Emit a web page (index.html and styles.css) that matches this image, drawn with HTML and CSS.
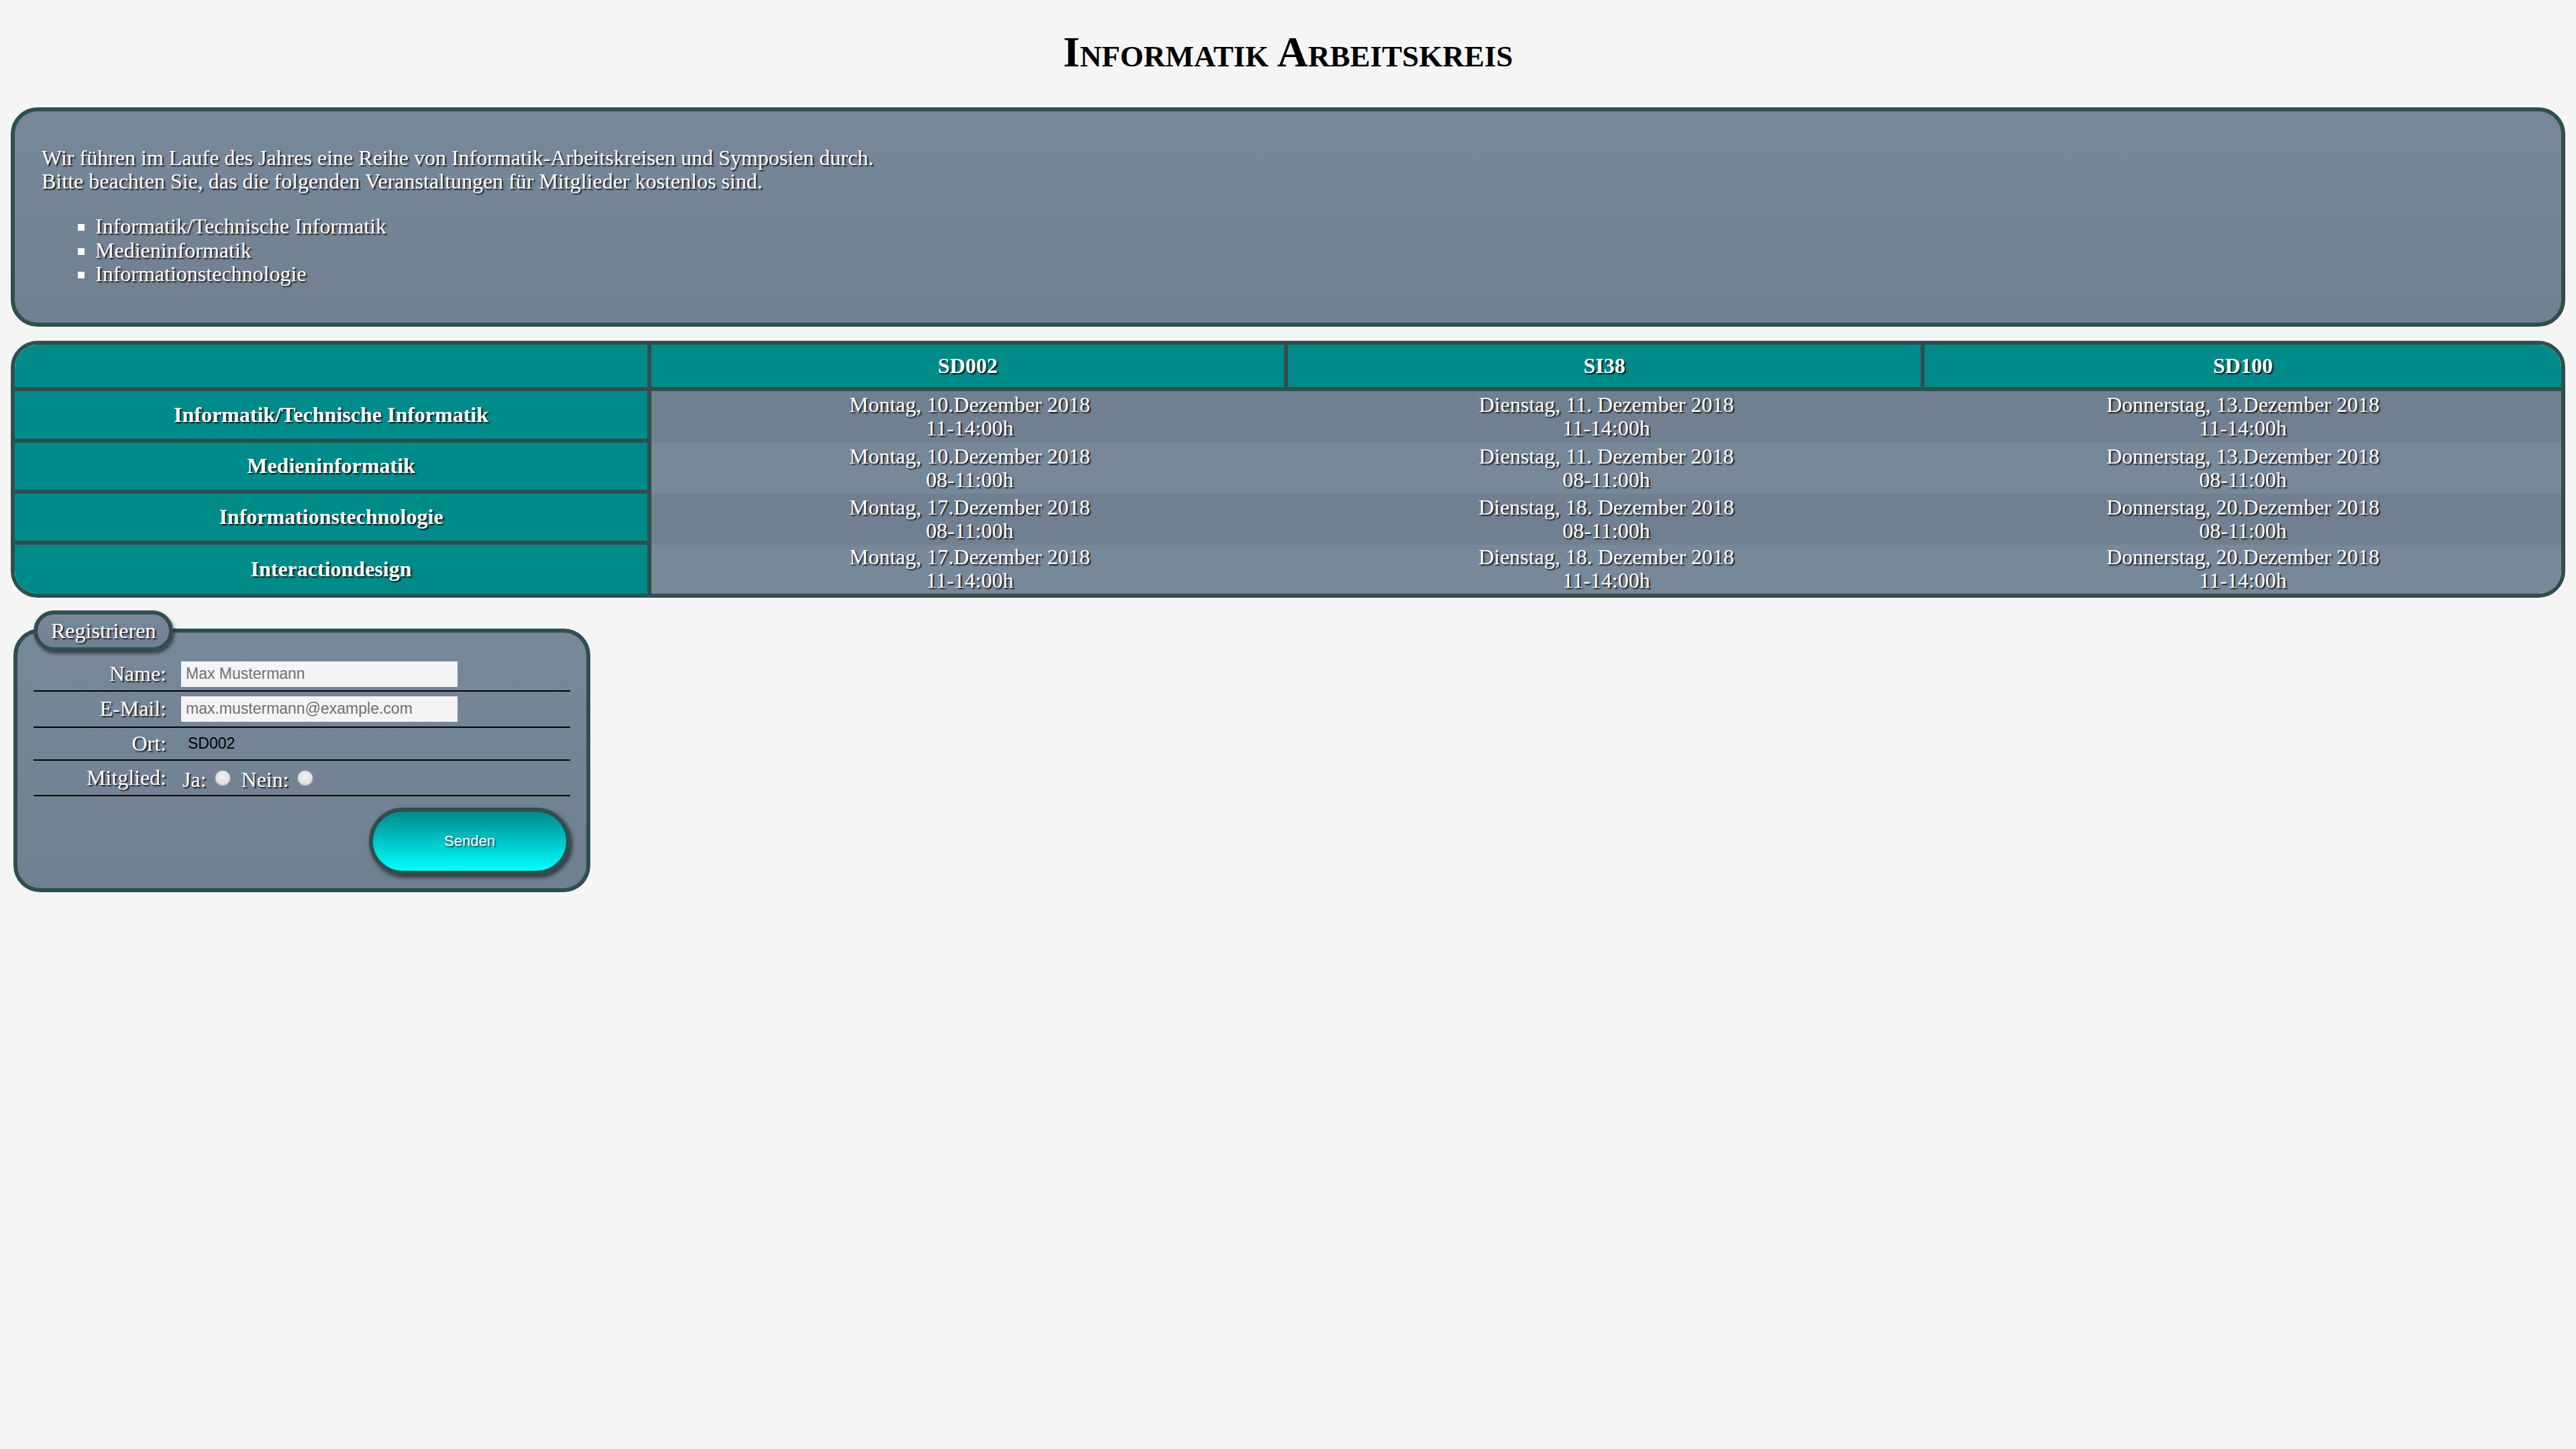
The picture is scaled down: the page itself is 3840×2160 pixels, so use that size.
FILE: index.html
```html
<!DOCTYPE html>
<html lang="de">
<head>
<meta charset="utf-8">
<title>Informatik Arbeitskreis</title>
<link rel="stylesheet" href="styles.css">
</head>
<body>
<h1 class="title">Informatik Arbeitskreis</h1>

<section class="intro">
  <p class="intro-text">Wir führen im Laufe des Jahres eine Reihe von Informatik-Arbeitskreisen und Symposien durch.<br>Bitte beachten Sie, das die folgenden Veranstaltungen für Mitglieder kostenlos sind.</p>
  <ul class="topics">
    <li>Informatik/Technische Informatik</li>
    <li>Medieninformatik</li>
    <li>Informationstechnologie</li>
  </ul>
</section>

<table class="schedule">
  <thead>
    <tr><th></th><th>SD002</th><th>SI38</th><th>SD100</th></tr>
  </thead>
  <tbody>
    <tr>
      <th>Informatik/Technische Informatik</th>
      <td>Montag, 10.Dezember 2018<br>11-14:00h</td>
      <td>Dienstag, 11. Dezember 2018<br>11-14:00h</td>
      <td>Donnerstag, 13.Dezember 2018<br>11-14:00h</td>
    </tr>
    <tr>
      <th>Medieninformatik</th>
      <td>Montag, 10.Dezember 2018<br>08-11:00h</td>
      <td>Dienstag, 11. Dezember 2018<br>08-11:00h</td>
      <td>Donnerstag, 13.Dezember 2018<br>08-11:00h</td>
    </tr>
    <tr>
      <th>Informationstechnologie</th>
      <td>Montag, 17.Dezember 2018<br>08-11:00h</td>
      <td>Dienstag, 18. Dezember 2018<br>08-11:00h</td>
      <td>Donnerstag, 20.Dezember 2018<br>08-11:00h</td>
    </tr>
    <tr>
      <th>Interactiondesign</th>
      <td>Montag, 17.Dezember 2018<br>11-14:00h</td>
      <td>Dienstag, 18. Dezember 2018<br>11-14:00h</td>
      <td>Donnerstag, 20.Dezember 2018<br>11-14:00h</td>
    </tr>
  </tbody>
</table>

<form class="register">
  <fieldset class="register-box">
    <legend class="register-legend">Registrieren</legend>
    <div class="form-row row-name">
      <label class="form-label" for="name">Name:</label>
      <div class="form-value"><input class="text-input" id="name" type="text" placeholder="Max Mustermann"></div>
    </div>
    <div class="form-row row-mail">
      <label class="form-label" for="mail">E-Mail:</label>
      <div class="form-value"><input class="text-input" id="mail" type="email" placeholder="max.mustermann@example.com"></div>
    </div>
    <div class="form-row row-ort">
      <span class="form-label">Ort:</span>
      <div class="form-value"><span class="ort-value">SD002</span></div>
    </div>
    <div class="form-row row-member">
      <span class="form-label">Mitglied:</span>
      <div class="form-value radios">
        <label class="radio-label" for="ja">Ja:</label><input class="radio" type="radio" id="ja" name="mitglied">
        <label class="radio-label" for="nein">Nein:</label><input class="radio" type="radio" id="nein" name="mitglied">
      </div>
    </div>
    <div class="form-actions">
      <button class="send" type="submit">Senden</button>
    </div>
  </fieldset>
</form>
</body>
</html>
```

FILE: styles.css
```css
html {
  background: #f5f5f5;
}

body {
  margin: 0 16px 16px;
  font-family: "Liberation Serif", "Times New Roman", serif;
  font-size: 32px;
  line-height: 1.1;
  color: #ffffff;
}

.title {
  margin: 0;
  padding: 41px 0 45px;
  font-size: 64px;
  line-height: normal;
  font-weight: bold;
  font-variant: small-caps;
  text-align: center;
  color: #000000;
}

.intro {
  margin: 0 0 21px;
  padding: 20px 40px 23px;
  border: 6px solid #2f4f4f;
  border-radius: 40px;
  background: linear-gradient(#778899, #708090);
  text-shadow: 2px 2px 2px rgba(0, 0, 0, 0.85);
}

.intro-text {
  margin: 32px 0;
}

.topics {
  margin: 32px 0;
  padding-left: 80px;
  list-style: square;
}

.schedule {
  width: 100%;
  margin: 0;
  border: 6px solid #2f4f4f;
  border-radius: 40px;
  border-spacing: 0;
  table-layout: fixed;
  text-shadow: 2px 2px 2px rgba(0, 0, 0, 0.85);
}

.schedule th {
  background: #008b8b;
  font-weight: bold;
  text-align: center;
}

.schedule thead th {
  padding: 14px 2px;
  border-bottom: 6px solid #2f4f4f;
  border-right: 6px solid #2f4f4f;
}

.schedule thead th:last-child {
  border-right: none;
  border-top-right-radius: 34px;
}

.schedule thead th:first-child {
  border-top-left-radius: 34px;
}

.schedule tbody th {
  padding: 2px;
  border-right: 6px solid #2f4f4f;
  border-bottom: 6px solid #2f4f4f;
}

.schedule tbody tr:last-child th {
  border-bottom: none;
  border-bottom-left-radius: 34px;
}

.schedule td {
  padding: 3px 2px;
  text-align: center;
  background: #708090;
}

.schedule tbody tr:nth-child(even) td {
  background: #778899;
}

.schedule tbody tr:last-child td {
  padding: 1px 2px;
}

.schedule tbody tr:last-child td:last-child {
  border-bottom-right-radius: 34px;
}

.register {
  margin: 0;
}

.register-box {
  width: 800px;
  margin: 19px 4px 4px;
  padding: 11px 24px 20px;
  border: 6px solid #2f4f4f;
  border-radius: 40px;
  background: linear-gradient(#778899, #708090);
  text-shadow: 2px 2px 2px rgba(0, 0, 0, 0.85);
}

.register-legend {
  padding: 7px 20px;
  border: 6px solid #2f4f4f;
  border-radius: 40px;
  background: linear-gradient(#778899, #708090);
  box-shadow: 2px 3px 5px rgba(0, 0, 0, 0.55);
}

.form-row {
  display: grid;
  grid-template-columns: 200px 1fr;
  column-gap: 20px;
  align-items: center;
  border-bottom: 2px solid #000000;
}

.row-name { padding: 4px 0 5px; }
.row-mail { padding: 7px 0 7px; }
.row-ort { padding: 6px 0 6px; }
.row-member { padding: 8px 0 8px; }

.form-label {
  text-align: right;
  padding-right: 2px;
}

.form-value {
  display: flex;
  align-items: center;
}

.text-input {
  width: 412px;
  height: 38px;
  box-sizing: border-box;
  margin: 0;
  padding: 0 7px;
  border: none;
  background: #f4f4f4;
  font-family: "Liberation Sans", Arial, sans-serif;
  font-size: 23px;
  color: #333333;
}

.text-input::placeholder {
  color: #707070;
}

.ort-value {
  padding-left: 10px;
  font-family: "Liberation Sans", Arial, sans-serif;
  font-size: 23px;
  color: #000000;
  text-shadow: none;
}

.radios {
  align-items: center;
}

.radio-label {
  padding-left: 2px;
  position: relative;
  top: 3px;
}

.radio {
  appearance: none;
  -webkit-appearance: none;
  width: 24px;
  height: 24px;
  margin: 0 14px 0 12px;
  border-radius: 50%;
  border: 1px solid #9a9a9a;
  background: radial-gradient(circle at 50% 40%, #f2f2f2 0%, #e2e2e2 55%, #cfcfcf 100%);
  box-shadow: inset 0 -1px 1px rgba(0, 0, 0, 0.15);
}

.form-actions {
  display: flex;
  justify-content: flex-end;
  margin-top: 17px;
}

.send {
  width: 300px;
  height: 100px;
  margin: 0;
  border: 6px solid #2f4f4f;
  border-radius: 50px;
  background: linear-gradient(#008b8b, #00ffff);
  box-shadow: 3px 4px 6px rgba(0, 0, 0, 0.6);
  color: #ffffff;
  font-family: "Liberation Sans", Arial, sans-serif;
  font-size: 22px;
  text-shadow: 2px 2px 2px rgba(0, 0, 0, 0.6);
}
```
